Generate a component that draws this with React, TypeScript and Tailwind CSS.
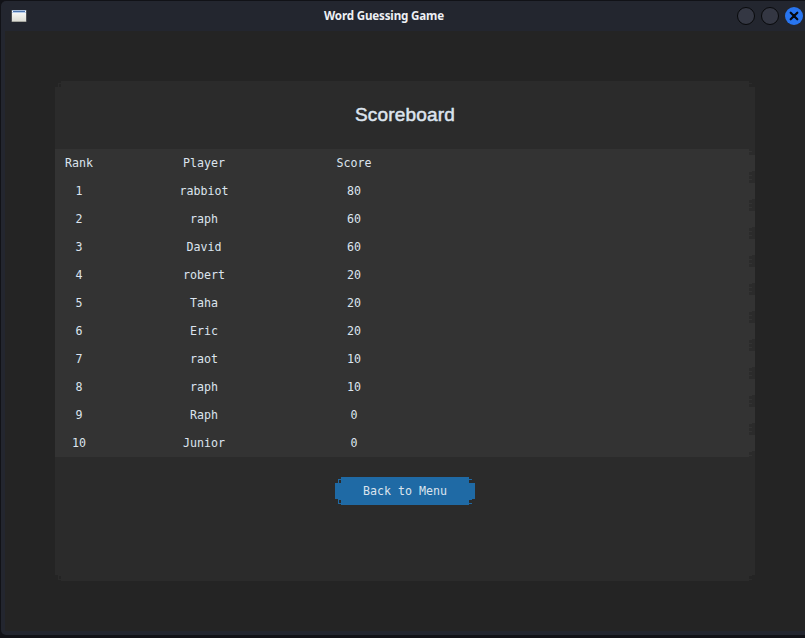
const rows = [
  ["Rank", "Player", "Score"],
  ["1", "rabbiot", "80"],
  ["2", "raph", "60"],
  ["3", "David", "60"],
  ["4", "robert", "20"],
  ["5", "Taha", "20"],
  ["6", "Eric", "20"],
  ["7", "raot", "10"],
  ["8", "raph", "10"],
  ["9", "Raph", "0"],
  ["10", "Junior", "0"],
];

// Stepped right-hand edge of a widget, cut out in the backdrop colour.
function RightCorners({ cut }: { cut: string }) {
  return (
    <>
      <svg className={`absolute top-0 right-0 ${cut}`} width="6" height="6" shapeRendering="crispEdges">
        <path fill="currentColor" d="M0 0H6V6H0V3H3V2H0Z" />
      </svg>
      <svg className={`absolute right-0 bottom-0 ${cut}`} width="6" height="6" shapeRendering="crispEdges">
        <path fill="currentColor" d="M3 0H6V6H0V5H3V4H0V1H3Z" />
      </svg>
    </>
  );
}

function LeftCorners({ cut }: { cut: string }) {
  return (
    <>
      <svg className={`absolute top-0 left-0 ${cut}`} width="6" height="6" shapeRendering="crispEdges">
        <path fill="currentColor" d="M0 0H6V2H3V6H0ZM4 3H6V6H4Z" />
      </svg>
      <svg className={`absolute bottom-0 left-0 ${cut}`} width="6" height="6" shapeRendering="crispEdges">
        <path fill="currentColor" d="M0 0H3V5H6V6H0ZM4 1H6V4H4Z" />
      </svg>
    </>
  );
}

export default function App() {
  return (
    <div className="h-[638px] w-[805px] overflow-hidden bg-[#111217] pt-px pb-[3px] pl-px">
      <div className="flex h-full flex-col rounded-l-[5px] bg-[#23262f] pb-1 pl-1">
        <header className="relative flex h-[30px] shrink-0 items-center justify-between">
          <svg className="ml-[6px]" width="16" height="14" viewBox="0 0 16 14" shapeRendering="crispEdges">
            <defs>
              <linearGradient id="page" x1="0" y1="0" x2="0" y2="1">
                <stop offset="0" stopColor="#ffffff" />
                <stop offset="1" stopColor="#d9dad2" />
              </linearGradient>
            </defs>
            <rect x="0" y="1" width="16" height="12" fill="#4b4d52" />
            <rect x="1" y="1" width="14" height="12" fill="url(#page)" />
            <rect x="1" y="1" width="14" height="1" fill="#a9bfdc" />
            <rect x="2" y="2" width="12" height="1" fill="#4d75ae" />
            <rect x="1" y="3" width="14" height="1" fill="#b8cdea" />
            <rect x="1" y="12" width="14" height="1" fill="#a5a69f" />
          </svg>
          <h1 className="absolute inset-x-0 top-[6px] pr-[42px] text-center font-['Noto_Sans',sans-serif] text-[11.6px] leading-[18px] font-bold tracking-[-0.17px] text-[#eef0f4]">
            Word Guessing Game
          </h1>
          <div className="mr-[2px] flex gap-[6px]">
            <span className="size-[18px] rounded-full border border-[#08090b] bg-[#343743]" />
            <span className="size-[18px] rounded-full border border-[#08090b] bg-[#343743]" />
            <span className="flex size-[18px] items-center justify-center rounded-full bg-[#2875f0]">
              <svg width="10" height="10" viewBox="0 0 10 10">
                <path d="M1.7 1.7L8.3 8.3M8.3 1.7L1.7 8.3" stroke="#06080d" strokeWidth="2.2" strokeLinecap="round" />
              </svg>
            </span>
          </div>
        </header>
        <main className="grow bg-[#242424] pt-[50px] pl-[50px]">
          <section className="relative flex h-[500px] w-[700px] flex-col items-center bg-[#2b2b2b]">
            <LeftCorners cut="text-[#242424]" />
            <RightCorners cut="text-[#242424]" />
            <h2 className="flex h-[68px] items-center font-['Liberation_Sans',sans-serif] text-[19px] tracking-[0.2px] text-[#dce4ee] [-webkit-text-stroke:0.5px_#dce4ee]">
              Scoreboard
            </h2>
            <div className="w-full font-['DejaVu_Sans_Mono',monospace] text-[11.63px] text-[#dce4ee]">
              {rows.map(([rank, player, score]) => (
                <div key={rank} className="relative flex h-7 items-center bg-[#333333] text-center leading-7">
                  <span className="w-12">{rank}</span>
                  <span className="ml-[51px] w-[100px]">{player}</span>
                  <span className="ml-[50px] w-[100px]">{score}</span>
                  <RightCorners cut="text-[#2b2b2b]" />
                </div>
              ))}
            </div>
            <button className="relative mt-5 h-7 w-[140px] bg-[#1f6aa5] font-['DejaVu_Sans_Mono',monospace] text-[11.63px] leading-7 text-[#dce4ee]">
              <LeftCorners cut="text-[#2b2b2b]" />
              <RightCorners cut="text-[#2b2b2b]" />
              Back to Menu
            </button>
          </section>
        </main>
      </div>
    </div>
  );
}
